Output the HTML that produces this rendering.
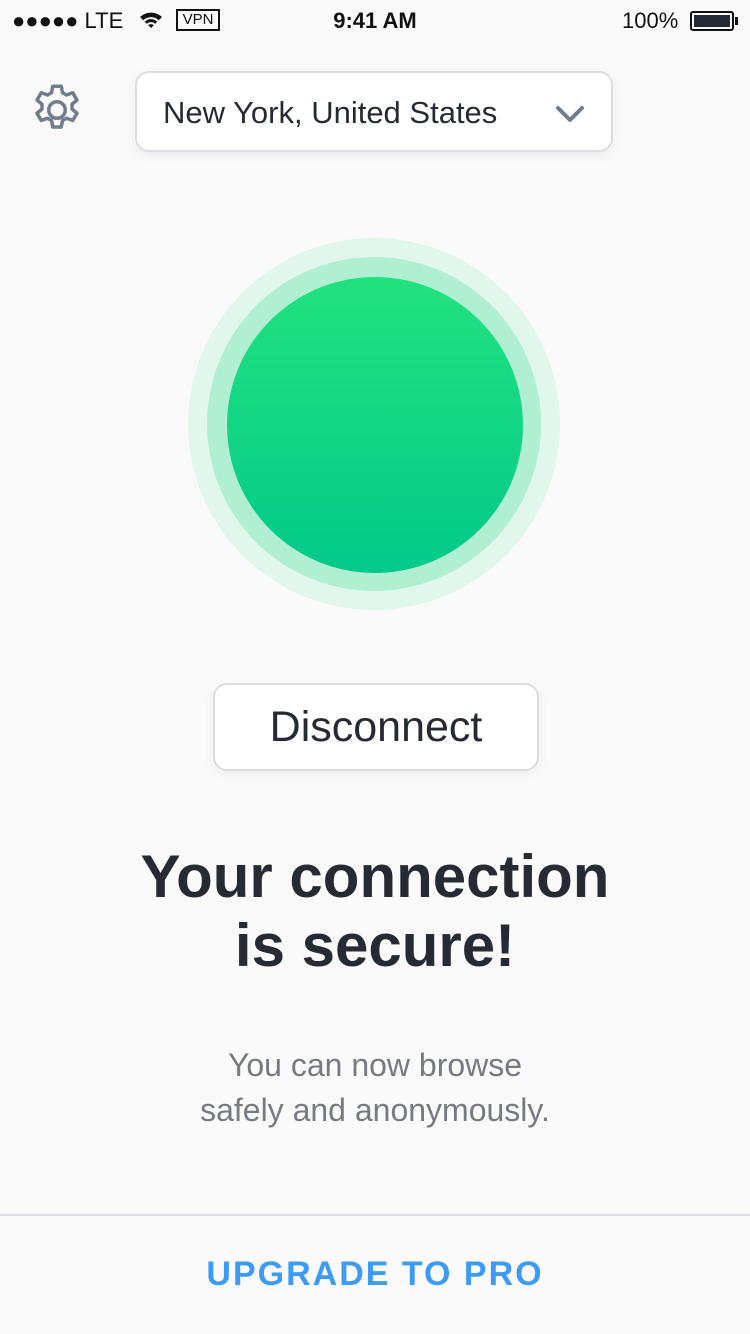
<!DOCTYPE html>
<html><head><meta charset="utf-8"><style>
*{margin:0;padding:0;box-sizing:border-box}
body{width:750px;height:1334px;background:#fafafa;font-family:"Liberation Sans",sans-serif;position:relative;overflow:hidden;color:#262b33}
.abs{position:absolute}
</style></head><body>
<div class="abs" style="left:12px;top:6px;font-size:22px;line-height:30px;color:#111">●●●●● LTE</div>
<svg class="abs" style="left:138px;top:10px" width="26" height="20" viewBox="0 0 26 20"><path d="M13 18 L2 7 A16 16 0 0 1 24 7 Z" fill="#111"/><path d="M6 11 A10 10 0 0 1 20 11" stroke="#fafafa" stroke-width="2" fill="none"/><path d="M9.5 14.5 A5 5 0 0 1 16.5 14.5" stroke="#fafafa" stroke-width="2" fill="none"/></svg>
<div class="abs" style="left:176px;top:9px;width:44px;height:22px;border:2px solid #111;font-size:15px;line-height:18px;text-align:center;color:#111">VPN</div>
<div class="abs" style="left:0;width:750px;top:6px;text-align:center;font-size:22px;line-height:30px;font-weight:bold;color:#111">9:41 AM</div>
<div class="abs" style="left:622px;top:6px;font-size:22px;line-height:30px;color:#111">100%</div>
<div class="abs" style="left:690px;top:11px;width:44px;height:20px;border:2px solid #111;border-radius:3px;padding:2px"><div style="width:100%;height:100%;background:#262b33"></div></div>
<div class="abs" style="left:735px;top:17px;width:3px;height:8px;background:#111"></div>
<svg class="abs" style="left:27px;top:80px" width="60" height="60" viewBox="0 0 24 24"><path fill="none" stroke="#737c8c" stroke-width="1.4" stroke-linejoin="round" d="M10.3 2.5h3.4l.5 2.6 1.6.9 2.5-.9 1.7 2.9-2 1.7v1.9l2 1.7-1.7 2.9-2.5-.9-1.6.9-.5 2.6h-3.4l-.5-2.6-1.6-.9-2.5.9-1.7-2.9 2-1.7v-1.9l-2-1.7 1.7-2.9 2.5.9 1.6-.9z"/><circle cx="12" cy="12" r="3.3" fill="none" stroke="#737c8c" stroke-width="1.4"/></svg>
<div class="abs" style="left:135px;top:71px;width:478px;height:81px;background:#fff;border:2px solid #dcdde0;border-radius:14px;box-shadow:0 4px 12px rgba(0,0,0,0.06)"></div>
<div class="abs" style="left:163px;top:94px;font-size:31px;line-height:38px;color:#262b33">New York, United States</div>
<svg class="abs" style="left:555px;top:104px" width="30" height="20" viewBox="0 0 30 20"><path d="M3 4 L15 16 L27 4" stroke="#737c8c" stroke-width="4" fill="none" stroke-linecap="round" stroke-linejoin="round"/></svg>
<div class="abs" style="left:188px;top:238px;width:372px;height:372px;border-radius:50%;background:#e1f7ec"></div>
<div class="abs" style="left:207px;top:257px;width:334px;height:334px;border-radius:50%;background:#b1efd3"></div>
<div class="abs" style="left:227px;top:277px;width:296px;height:296px;border-radius:50%;background:linear-gradient(#22e27f,#03c98a)"></div>
<div class="abs" style="left:213px;top:683px;width:326px;height:88px;background:#fff;border:2px solid #dcdde0;border-radius:14px;box-shadow:0 4px 12px rgba(0,0,0,0.05);text-align:center;font-size:43px;line-height:84px;color:#262b33">Disconnect</div>
<div class="abs" style="left:0;width:750px;top:842px;text-align:center;font-size:60px;line-height:69px;font-weight:bold;color:#262b33">Your connection<br>is secure!</div>
<div class="abs" style="left:0;width:750px;top:1043px;text-align:center;font-size:32px;line-height:45px;color:#777a80">You can now browse<br>safely and anonymously.</div>
<div class="abs" style="left:0;width:750px;top:1214px;height:2px;background:#dedfe2"></div>
<div class="abs" style="left:0;width:750px;top:1254px;text-align:center;font-size:34px;line-height:40px;font-weight:bold;color:#3d9bf5;letter-spacing:2px">UPGRADE TO PRO</div>
</body></html>
